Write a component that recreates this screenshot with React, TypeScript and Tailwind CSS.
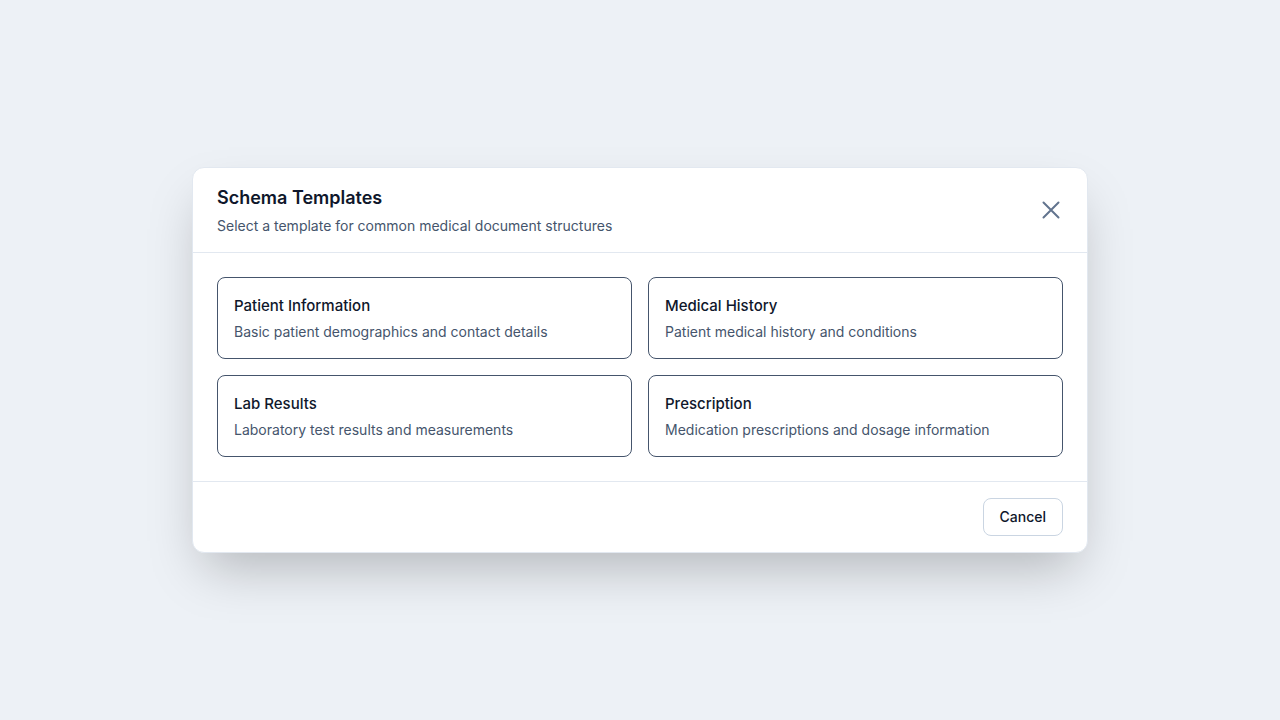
const templates = [
  { title: 'Patient Information', description: 'Basic patient demographics and contact details' },
  { title: 'Medical History', description: 'Patient medical history and conditions' },
  { title: 'Lab Results', description: 'Laboratory test results and measurements' },
  { title: 'Prescription', description: 'Medication prescriptions and dosage information' },
];

export default function App() {
  return (
    <div
      className="min-h-screen bg-[#edf1f6] flex items-center justify-center"
      style={{ fontFamily: 'Inter, "Noto Sans", sans-serif' }}
    >
      <div className="w-[896px] bg-white rounded-xl border border-slate-200 shadow-2xl">
        <div className="flex items-center justify-between px-6 py-4 border-b border-slate-200">
          <div>
            <h2 className="text-lg font-semibold text-slate-900">Schema Templates</h2>
            <p className="mt-1 text-sm text-slate-600">
              Select a template for common medical document structures
            </p>
          </div>
          <button className="text-slate-500">
            <svg width="24" height="24" viewBox="0 0 24 24" fill="none" stroke="currentColor" strokeWidth="2" strokeLinecap="round">
              <path d="M4.5 4.5 19.5 19.5M19.5 4.5 4.5 19.5" />
            </svg>
          </button>
        </div>

        <div className="p-6 grid grid-cols-2 gap-4">
          {templates.map((t) => (
            <button
              key={t.title}
              className="text-left rounded-lg border border-slate-600 p-4 bg-white"
            >
              <div className="text-[15px] leading-[23px] font-medium text-slate-900">{t.title}</div>
              <div className="mt-[5px] text-sm text-slate-600">{t.description}</div>
            </button>
          ))}
        </div>

        <div className="flex justify-end px-6 py-4 border-t border-slate-200">
          <button className="px-4 py-2 text-sm font-medium text-slate-900 border border-slate-300 rounded-lg bg-white">
            Cancel
          </button>
        </div>
      </div>
    </div>
  );
}
